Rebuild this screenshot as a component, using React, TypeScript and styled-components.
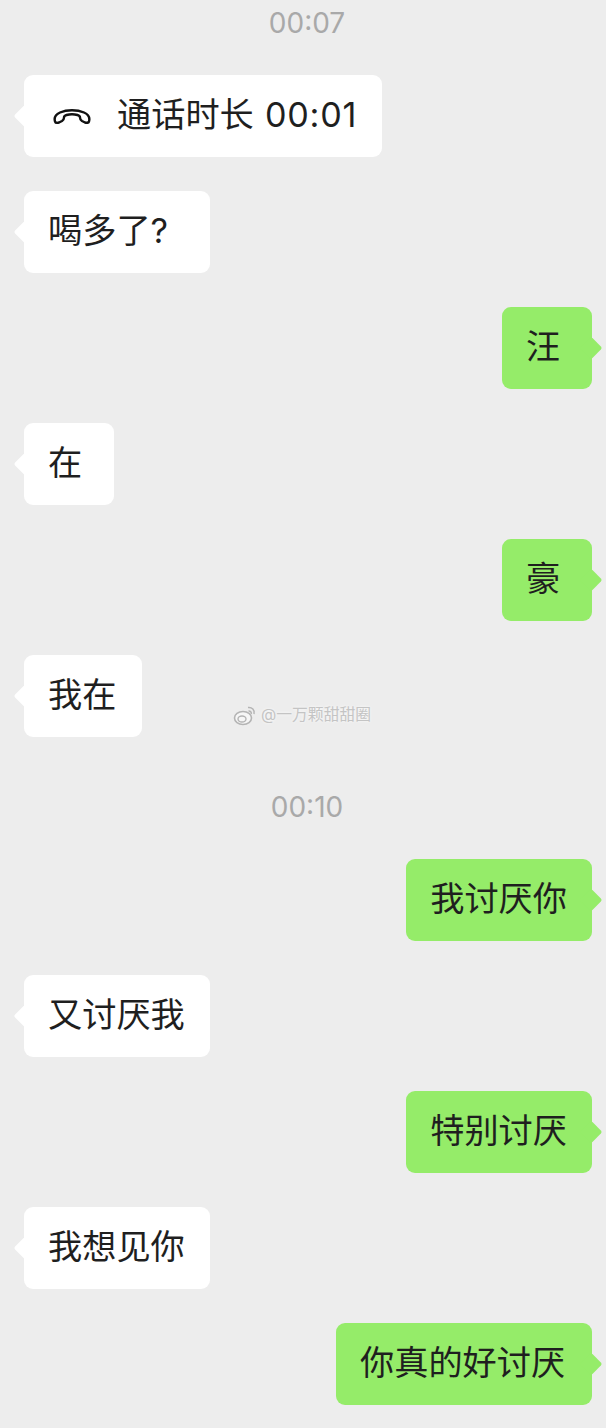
import * as React from "react"
import styled, { createGlobalStyle } from "styled-components"

const GlobalStyle = createGlobalStyle`
    html, body {
        margin: 0;
        padding: 0;
        background: #ededed;
    }
`

const Chat = styled.div`
    position: relative;
    width: 606px;
    height: 1428px;
    overflow: hidden;
    box-sizing: border-box;
    padding: 0 14px 0 24px;
    display: flex;
    flex-direction: column;
    background: #ededed;
    font-family: "Inter", "Noto Sans CJK SC", "Noto Sans", sans-serif;
`

const Time = styled.div<{ $first?: boolean }>`
    height: 44px;
    line-height: 46px;
    margin-top: ${p => (p.$first ? "0" : "13px")};
    margin-bottom: 31px;
    margin-left: -2px;
    text-align: center;
    font-size: 28px;
    color: #a9a9a9;
`

const Row = styled.div<{ $mine?: boolean }>`
    display: flex;
    justify-content: ${p => (p.$mine ? "flex-end" : "flex-start")};
    margin-bottom: 34px;
`

const Bubble = styled.div<{ $mine?: boolean; $wide?: number }>`
    position: relative;
    box-sizing: border-box;
    display: flex;
    align-items: center;
    height: 82px;
    min-width: ${p => (p.$wide ? `${p.$wide}px` : "90px")};
    padding: 0 25px 3px 24px;
    border-radius: 9px;
    background: ${p => (p.$mine ? "#95ec69" : "#ffffff")};
    color: #1f1f1f;
    font-size: 34.2px;
    line-height: 76px;
    white-space: nowrap;

    &::before {
        content: "";
        position: absolute;
        top: 33px;
        ${p => (p.$mine ? "right: -7px;" : "left: -7px;")}
        width: 16px;
        height: 16px;
        background: inherit;
        border-radius: 2px;
        transform: rotate(45deg);
    }
`

const CallIcon = styled.svg`
    flex: none;
    width: 40px;
    height: 20px;
    margin: 3px 25px 0 4px;
`

const CallDuration = styled.span`
    margin-left: 1px;
    letter-spacing: 0.7px;
`

const Watermark = styled.div`
    position: absolute;
    left: 233px;
    top: 703px;
    display: flex;
    align-items: center;
    gap: 4px;
    color: #c4c4c4;
    font-size: 15.8px;
    line-height: 24px;
    text-shadow: 0 0 3px #fff;
`

const WeiboIcon = styled.svg`
    width: 24px;
    height: 22px;
`

const messages: { text: string; mine?: boolean; wide?: number }[] = [
    { text: "喝多了?", wide: 186 },
    { text: "汪", mine: true },
    { text: "在" },
    { text: "豪", mine: true },
    { text: "我在", wide: 118 },
]

const laterMessages: { text: string; mine?: boolean; wide?: number }[] = [
    { text: "我讨厌你", mine: true },
    { text: "又讨厌我" },
    { text: "特别讨厌", mine: true },
    { text: "我想见你" },
    { text: "你真的好讨厌", mine: true, wide: 256 },
]

const Message: React.FunctionComponent<{ text: string; mine?: boolean; wide?: number }> = props => (
    <Row $mine={props.mine}>
        <Bubble $mine={props.mine} $wide={props.wide}>
            {props.text}
        </Bubble>
    </Row>
)

export default function App() {
    return (
        <Chat>
            <GlobalStyle />
            <Time $first>00:07</Time>
            <Row>
                <Bubble $wide={358}>
                    <CallIcon viewBox="0 0 40 20">
                        <path
                            d="M3 15.5C2 12 3.5 8.5 8 6.5C15 3.5 25 3.5 32 6.5C36.5 8.5 38 12 37 15.5C36.5 17 34.5 17 33 16.5L30 15C28.5 14 28 13 28 11.5C28 10 27 9.5 25.5 9C22 8 18 8 14.5 9C13 9.5 12 10 12 11.5C12 13 11.5 14 10 15L7 16.5C5.5 17 3.5 17 3 15.5Z"
                            fill="none"
                            stroke="#111"
                            strokeWidth="2.4"
                            strokeLinejoin="round"
                        />
                    </CallIcon>
                    <span>通话时长</span>
                    <CallDuration>&nbsp;00:01</CallDuration>
                </Bubble>
            </Row>
            {messages.map((m, i) => (
                <Message key={i} {...m} />
            ))}
            <Time>00:10</Time>
            {laterMessages.map((m, i) => (
                <Message key={i} {...m} />
            ))}
            <Watermark>
                <WeiboIcon viewBox="0 0 24 22">
                    <ellipse cx="10" cy="14" rx="8.5" ry="6.5" fill="#f6f6f6" stroke="#b4b4b4" strokeWidth="1.6" />
                    <ellipse cx="9" cy="15" rx="4" ry="3" fill="none" stroke="#b4b4b4" strokeWidth="1.4" />
                    <path d="M15 3.5C19 3 22 6 21 10M15.5 7C17.5 6.8 18.6 8 18.2 10" fill="none" stroke="#b4b4b4" strokeWidth="1.5" />
                </WeiboIcon>
                <span>@一万颗甜甜圈</span>
            </Watermark>
        </Chat>
    )
}
